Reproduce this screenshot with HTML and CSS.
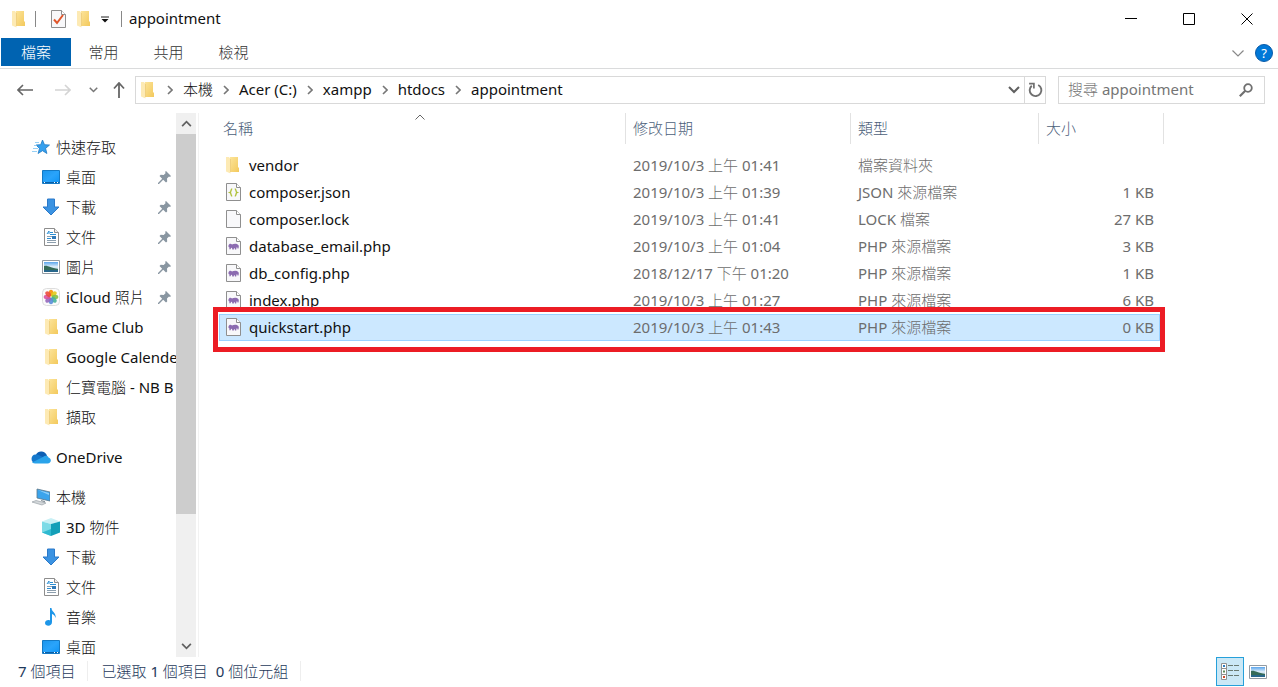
FILE: index.html
```html
<!DOCTYPE html>
<html lang="zh-Hant">
<head>
<meta charset="utf-8">
<title>appointment</title>
<link rel="stylesheet" href="styles.css">
</head>
<body>
<svg class="defs" aria-hidden="true">
  <defs>
    <linearGradient id="g-folder" x1="0" x2="1" y1="0" y2="1"><stop offset="0" stop-color="#fce49a"/><stop offset="1" stop-color="#f3c95c"/></linearGradient>
    <linearGradient id="g-screen" x1="0" x2="1" y1="0" y2="1"><stop offset="0" stop-color="#1b95ec"/><stop offset=".5" stop-color="#2aa4fb"/><stop offset="1" stop-color="#0c93f5"/></linearGradient>
    <linearGradient id="g-photo" x1="0" x2="0" y1="0" y2="1"><stop offset="0" stop-color="#5aa5ec"/><stop offset=".5" stop-color="#e4f1fa"/><stop offset="1" stop-color="#4b86a8"/></linearGradient>
    <symbol id="folder" viewBox="0 0 13 18"><path d="M4 1h8v10l1 1v4H4z" fill="url(#g-folder)"/><path d="M0 1h3l1.500 2v14.500L0 15.500z" fill="#fdeab4"/><path d="M4.500 3v13" stroke="#f0d080"/></symbol>
    <symbol id="desktop" viewBox="0 0 18 14"><path d="M.5.5h17v13H.5z" fill="url(#g-screen)" stroke="#1479c4"/><path d="M1 12.500h16" stroke="#0b5fa5"/><path d="M2 12.500h1M12 12.500h1M15 12.500h1" stroke="#fff"/></symbol>
    <symbol id="download" viewBox="0 0 18 18"><path d="M5.500 1h7v8H17l-8 8L1 9h4.500z" fill="#3b93e2" stroke="#2b79c9"/></symbol>
    <symbol id="document" viewBox="0 0 15 18"><path d="M.5.5h10l4 4v13H.5z" fill="#fff" stroke="#8d8d8d"/><path d="M10.500.5v4h4" fill="#eee" stroke="#8d8d8d"/><path d="M3 8.500h5M3 12.500h9M3 14.500h9" stroke="#8d9fae"/><path d="m3 6 2-3v3M6 4.500h3M6 6.500h6M3 10.500h4" fill="none" stroke="#2b8fd4"/><path d="M8 8h4v3H8z" fill="#2f79b8"/></symbol>
    <symbol id="picture" viewBox="0 0 18 14"><path d="M.5.5h17v13H.5z" fill="#fff" stroke="#929ba3"/><path d="M2 2h14v10H2z" fill="url(#g-photo)"/><path d="M2 6c4-1 6 2 14 3v1H2z" fill="#356b58"/><path d="M2 10h14v2H2z" fill="#28678b"/></symbol>
    <symbol id="pin" viewBox="0 0 13 13"><path d="m8 0 5 5-1 1-1-.5-2 2 .2 3L8 11.500 5.200 8.800 1 13H0v-1l4.200-4.200L1.500 5 2.700 3.800l3 .2 2-2L7 1z" fill="#8996a1"/></symbol>
    <symbol id="chevron" viewBox="0 0 6 10"><path d="m1 1 4 4-4 4" fill="none" stroke="#777" stroke-width="1.600"/></symbol>
    <symbol id="down" viewBox="0 0 12 8"><path d="m1 1 5 5 5-5" fill="none" stroke="currentColor" stroke-width="2"/></symbol>
    <symbol id="page" viewBox="0 0 15 18"><path d="M.5.5h10l4 4v13H.5z" fill="#f8f8fa" stroke="#8f8f8f"/><path d="M10.500.5v4h4" fill="#fff" stroke="#8f8f8f"/></symbol>
    <symbol id="php" viewBox="0 0 15 18"><use href="#page"/><path d="M2.500 8.500C3 6.500 5 6.500 6 7.500c2-1 5-1 6.300.5.900 1 .4 2 .2 3.500h-1l-.3-1.200-.7.200-.3 2H9l-.5-1.500H8l-.2 1.500H6.300L6 10.700l-1 .2-.4 1.300H3.300l.2-1.700c-1-.3-1.200-1-1-2z" fill="#8b6bb0"/></symbol>
    <symbol id="json" viewBox="0 0 15 18"><use href="#page"/><path d="M6.200 6C4.500 6 5.500 9 4 9.500c1.500.5.5 3.500 2.200 3.500M8.800 6c1.700 0 .7 3 2.200 3.500-1.500.5-.5 3.500-2.200 3.500" fill="none" stroke="#b0c13c" stroke-width="1.400"/></symbol>
  </defs>
</svg>

<header class="titlebar">
  <svg class="i-folder"><use href="#folder"/></svg>
  <span class="rule"></span>
  <button class="plain" aria-label="內容"><svg class="i-page" viewBox="0 0 15 18"><use href="#page"/><path d="m3 9.500 3 3.500 6-8" fill="none" stroke="#e0562b" stroke-width="2"/></svg></button>
  <button class="plain" aria-label="新增資料夾"><svg class="i-folder"><use href="#folder"/></svg></button>
  <button class="plain" aria-label="自訂"><svg class="i-custom" viewBox="0 0 8 7"><path d="M0 1h8" stroke="#222"/><path d="M.5 3h7L4 6.500z" fill="#111"/></svg></button>
  <span class="rule"></span>
  <h1 class="title">appointment</h1>
  <div class="window-buttons">
    <button class="plain" aria-label="最小化"><svg viewBox="0 0 12 12"><path d="M0 5.500h12" stroke="#000"/></svg></button>
    <button class="plain" aria-label="最大化"><svg viewBox="0 0 12 12"><path d="M.5.5h11v11H.5z" fill="none" stroke="#000"/></svg></button>
    <button class="plain" aria-label="關閉"><svg viewBox="0 0 12 12"><path d="m.5.5 11 11M11.500.5l-11 11" stroke="#000"/></svg></button>
  </div>
</header>

<div class="ribbon">
  <button class="tab tab-file">檔案</button>
  <button class="tab">常用</button>
  <button class="tab">共用</button>
  <button class="tab">檢視</button>
  <div class="ribbon-end">
    <button class="plain" aria-label="展開功能區"><svg class="i-expand" viewBox="0 0 12 7"><path d="m.5.5 5.500 5.500L11.500.5" fill="none" stroke="#888" stroke-width="1.200"/></svg></button>
    <button class="help" aria-label="說明">?</button>
  </div>
</div>

<div class="address-row">
  <div class="nav-buttons">
    <button class="plain b-back" aria-label="上一頁"><svg class="i-arrow" viewBox="0 0 16 12"><path d="M16 6H1M6 1 1 6l5 5" fill="none" stroke="#666" stroke-width="1.600"/></svg></button>
    <button class="plain b-forward" aria-label="下一頁"><svg class="i-arrow" viewBox="0 0 16 12"><path d="M0 6h15M10 1l5 5-5 5" fill="none" stroke="#d4d4d4" stroke-width="1.600"/></svg></button>
    <button class="plain b-recent" aria-label="最近的位置"><svg class="i-recent"><use href="#down"/></svg></button>
    <button class="plain b-up" aria-label="上移"><svg class="i-up" viewBox="0 0 12 16"><path d="M6 16V1M1 6.500 6 1l5 5.500" fill="none" stroke="#666" stroke-width="1.800"/></svg></button>
  </div>
  <div class="address">
    <nav class="crumbs" aria-label="路徑">
      <svg class="i-folder"><use href="#folder"/></svg>
      <svg class="i-chev"><use href="#chevron"/></svg><a href="#">本機</a>
      <svg class="i-chev"><use href="#chevron"/></svg><a href="#">Acer (C:)</a>
      <svg class="i-chev"><use href="#chevron"/></svg><a href="#">xampp</a>
      <svg class="i-chev"><use href="#chevron"/></svg><a href="#">htdocs</a>
      <svg class="i-chev"><use href="#chevron"/></svg><a href="#">appointment</a>
    </nav>
    <button class="plain b-history" aria-label="之前的位置"><svg class="i-down"><use href="#down"/></svg></button>
    <button class="plain b-refresh" aria-label="重新整理"><svg class="i-refresh" viewBox="0 0 14 15"><path d="M9.500 2.800A5.500 5.500 0 1 1 3.500 3.500" fill="none" stroke="#707070" stroke-width="1.800"/><path d="M1 1.500h4.500V6" fill="none" stroke="#707070" stroke-width="1.600"/></svg></button>
  </div>
  <label class="search">
    <input type="search" placeholder="搜尋 appointment" aria-label="搜尋 appointment">
    <svg class="i-search" viewBox="0 0 14 14"><circle cx="9" cy="5" r="3.800" fill="none" stroke="#707070" stroke-width="1.800"/><path d="M6.300 7.700.8 13.200" stroke="#707070" stroke-width="2.200"/></svg>
  </label>
</div>

<div class="main">
  <aside class="sidebar">
    <nav class="tree" aria-label="導覽窗格">
      <ul>
        <li><a class="root" href="#"><svg class="i-18" viewBox="0 0 18 18"><path d="m10.500 2 2 4.700 5 .3-3.900 3.400 1.300 5.100-4.400-2.800-4.400 2.800 1.400-5.100L4 7l4.700-.3z" fill="#35a0ee" stroke="#1f78c2" stroke-width=".8"/><path d="M3 4.500h4M2 7.500h3M1 10.500h5M0 13.500h5" stroke="#7cc4f2" stroke-width=".8"/></svg><span>快速存取</span></a></li>
        <li><a href="#"><svg class="i-wide"><use href="#desktop"/></svg><span>桌面</span><svg class="i-pin"><use href="#pin"/></svg></a></li>
        <li><a href="#"><svg class="i-18"><use href="#download"/></svg><span>下載</span><svg class="i-pin"><use href="#pin"/></svg></a></li>
        <li><a href="#"><svg class="i-doc"><use href="#document"/></svg><span>文件</span><svg class="i-pin"><use href="#pin"/></svg></a></li>
        <li><a href="#"><svg class="i-wide"><use href="#picture"/></svg><span>圖片</span><svg class="i-pin"><use href="#pin"/></svg></a></li>
        <li><a href="#"><svg class="i-18" viewBox="0 0 18 18"><rect x=".5" y=".5" width="17" height="17" rx="4" fill="#fbfbfb" stroke="#ddd"/><g transform="translate(9 9)"><ellipse cy="-4" rx="2.200" ry="3.300" fill="#f79a1e"/><ellipse cy="-4" rx="2.200" ry="3.300" fill="#e3c91c" fill-opacity=".9" transform="rotate(45)"/><ellipse cy="-4" rx="2.200" ry="3.300" fill="#84bf45" fill-opacity=".9" transform="rotate(90)"/><ellipse cy="-4" rx="2.200" ry="3.300" fill="#46b39a" fill-opacity=".9" transform="rotate(135)"/><ellipse cy="-4" rx="2.200" ry="3.300" fill="#5a8ed8" fill-opacity=".9" transform="rotate(180)"/><ellipse cy="-4" rx="2.200" ry="3.300" fill="#9467bd" fill-opacity=".9" transform="rotate(225)"/><ellipse cy="-4" rx="2.200" ry="3.300" fill="#d9529b" fill-opacity=".9" transform="rotate(270)"/><ellipse cy="-4" rx="2.200" ry="3.300" fill="#ec4b3c" fill-opacity=".9" transform="rotate(315)"/></g></svg><span>iCloud 照片</span><svg class="i-pin"><use href="#pin"/></svg></a></li>
        <li><a href="#"><svg class="i-folder"><use href="#folder"/></svg><span>Game Club</span></a></li>
        <li><a href="#"><svg class="i-folder"><use href="#folder"/></svg><span>Google Calende</span></a></li>
        <li><a href="#"><svg class="i-folder"><use href="#folder"/></svg><span>仁寶電腦 - NB B</span></a></li>
        <li><a href="#"><svg class="i-folder"><use href="#folder"/></svg><span>擷取</span></a></li>
      </ul>
      <ul>
        <li><a class="root" href="#"><svg class="i-cloud" viewBox="0 0 20 13"><path d="M5 4a6 6 0 0 1 11 1.500L9 9z" fill="#0d5fb4"/><path d="M4.500 4C7 3.500 9 5 13 7l-9 5.500A4.300 4.300 0 0 1 4.500 4z" fill="#1478cc"/><path d="M12 6.500c2-2 5-1.500 5.500.5 3.500 1 3 6-1 6H4c-1.500 0-3-1-3-1z" fill="#2aa3ea"/></svg><span>OneDrive</span></a></li>
      </ul>
      <ul>
        <li><a class="root" href="#"><svg class="i-18" viewBox="0 0 18 18"><path d="m5 1 13 3v9L5 10z" fill="#3ba4ec" stroke="#5d7688" stroke-width=".8"/><path d="m6 2 11 3v2z" fill="#8fd0fa"/><path d="m0 14 4-1.500L14 15l-4 2z" fill="#d4d8db" stroke="#9ba2a7" stroke-width=".7"/><path d="m9 12 4 1v1.500L9 13z" fill="#8a949b"/></svg><span>本機</span></a></li>
        <li><a href="#"><svg class="i-18" viewBox="0 0 18 18"><path d="M0 3.500 9 0l9 3.500L9 6z" fill="#c9f0f5"/><path d="m0 3.500 9 2.500v12l-9-3.500z" fill="#7ddbe7"/><path d="m9 6 9-2.500v11L9 18z" fill="#139fb8"/><path d="M0 14.500 9 11v7z" fill="#2fb9d0"/></svg><span>3D 物件</span></a></li>
        <li><a href="#"><svg class="i-18"><use href="#download"/></svg><span>下載</span></a></li>
        <li><a href="#"><svg class="i-doc"><use href="#document"/></svg><span>文件</span></a></li>
        <li><a href="#"><svg class="i-18" viewBox="0 0 18 18"><path d="M8 0h1.500c0 4 5 4.500 4 10-.5-2.500-2-3.500-3.500-4v8c0 5-7 4.500-7 1 0-2.500 3-3.500 5-2.500z" fill="#1d96e8"/></svg><span>音樂</span></a></li>
        <li><a href="#"><svg class="i-wide"><use href="#desktop"/></svg><span>桌面</span></a></li>
      </ul>
    </nav>
    <div class="scrollbar" aria-hidden="true">
      <div class="scroll-arrow"><svg class="i-down flip"><use href="#down"/></svg></div>
      <div class="scroll-thumb"></div>
      <div class="scroll-rest"></div>
      <div class="scroll-arrow"><svg class="i-down"><use href="#down"/></svg></div>
    </div>
  </aside>

  <main class="files">
    <table>
      <colgroup><col class="c-name"><col class="c-date"><col class="c-type"><col class="c-size"><col class="c-end"></colgroup>
      <thead>
        <tr>
          <th class="sorted">名稱<svg class="i-sort" viewBox="0 0 10 6"><path d="m.5 5.500 4.500-4.500 4.500 4.500" fill="none" stroke="#666"/></svg></th>
          <th>修改日期</th><th>類型</th><th class="h-size">大小</th><th class="h-end"></th>
        </tr>
      </thead>
      <tbody>
        <tr><td class="name"><div class="file"><svg class="i-folder"><use href="#folder"/></svg>vendor</div></td><td>2019/10/3 上午 01:41</td><td>檔案資料夾</td><td></td><td></td></tr>
        <tr><td class="name"><div class="file"><svg class="i-page"><use href="#json"/></svg>composer.json</div></td><td>2019/10/3 上午 01:39</td><td>JSON 來源檔案</td><td class="size">1 KB</td><td></td></tr>
        <tr><td class="name"><div class="file"><svg class="i-page"><use href="#page"/></svg>composer.lock</div></td><td>2019/10/3 上午 01:41</td><td>LOCK 檔案</td><td class="size">27 KB</td><td></td></tr>
        <tr><td class="name"><div class="file"><svg class="i-page"><use href="#php"/></svg>database_email.php</div></td><td>2019/10/3 上午 01:04</td><td>PHP 來源檔案</td><td class="size">3 KB</td><td></td></tr>
        <tr><td class="name"><div class="file"><svg class="i-page"><use href="#php"/></svg>db_config.php</div></td><td>2018/12/17 下午 01:20</td><td>PHP 來源檔案</td><td class="size">1 KB</td><td></td></tr>
        <tr><td class="name"><div class="file"><svg class="i-page"><use href="#php"/></svg>index.php</div></td><td>2019/10/3 上午 01:27</td><td>PHP 來源檔案</td><td class="size">6 KB</td><td></td></tr>
        <tr class="selected"><td class="name"><div class="file"><svg class="i-page"><use href="#php"/></svg>quickstart.php</div></td><td>2019/10/3 上午 01:43</td><td>PHP 來源檔案</td><td class="size">0 KB</td><td><span class="marker"></span></td></tr>
      </tbody>
    </table>
  </main>
</div>

<footer class="status">
  <span class="status-item">7 個項目</span>
  <span class="status-item">已選取 1 個項目&nbsp; 0 個位元組</span>
  <div class="views">
    <button class="view view-on" aria-label="詳細資料"><svg class="i-details" viewBox="0 0 18 17"><path d="M.5.5h5v16h-5zM.5 5.500h5M.5 11.500h5" fill="#fff" stroke="#909090"/><path d="M2 3h2" stroke="#2b7cc0" stroke-width="2"/><path d="M2 8.500h2" stroke="#5d8a5a" stroke-width="2"/><path d="M2 14h2" stroke="#d04a2b" stroke-width="2"/><path d="M7 2.500h5m1 0h5M7 7.500h5m1 0h5M7 12.500h5m1 0h5" stroke="#6a7a72"/></svg></button>
    <button class="view" aria-label="大圖示"><svg class="i-wide"><use href="#picture"/></svg></button>
  </div>
</footer>
</body>
</html>
```

FILE: styles.css
```css
* {
  box-sizing: border-box;
}

body {
  margin: 0;
  height: 100vh;
  display: flex;
  flex-direction: column;
  overflow: hidden;
  background: #fff;
  color: #111;
  font: 15px/20px "Noto Sans", "Noto Sans CJK TC Light", "Noto Sans CJK TC DemiLight", "Noto Sans CJK TC", sans-serif;
}

svg {
  display: block;
  flex: none;
}

button,
input {
  font: inherit;
  color: inherit;
}

a {
  color: inherit;
  text-decoration: none;
}

ul {
  list-style: none;
  margin: 0;
  padding: 0;
}

.defs {
  position: absolute;
  width: 0;
  height: 0;
}

.plain {
  display: flex;
  align-items: center;
  justify-content: center;
  padding: 0;
  border: 0;
  background: none;
}

.i-folder { width: 13px; height: 18px; }
.i-page, .i-doc { width: 15px; height: 18px; }
.i-18 { width: 18px; height: 18px; }
.i-wide { width: 18px; height: 14px; }
.i-cloud { width: 20px; height: 14px; }
.i-pin { width: 13px; height: 13px; }
.i-custom { width: 8px; height: 7px; }
.i-expand { width: 12px; height: 7px; }
.i-arrow { width: 16px; height: 12px; }
.i-recent { width: 9px; height: 6px; color: #777; }
.i-up { width: 12px; height: 16px; }
.i-chev { width: 6px; height: 10px; }
.i-down { width: 12px; height: 8px; color: #606060; }
.i-refresh { width: 15px; height: 16px; }
.i-search { width: 14px; height: 14px; }
.i-details { width: 18px; height: 17px; }

/* Title bar */
.titlebar {
  display: flex;
  align-items: center;
  height: 38px;
  padding-left: 12px;
}

.titlebar .rule {
  width: 1px;
  height: 16px;
  margin: 0 15px 0 10px;
  background: #888;
}

.titlebar .plain + .plain {
  margin-left: 11px;
}

.titlebar .plain + .rule {
  margin: 0 7px 0 12px;
}

.title {
  margin: 0;
  padding-bottom: 2px;
  font-size: 15px;
  font-weight: 400;
}

.window-buttons {
  display: flex;
  margin-left: auto;
  padding-right: 2px;
}

.window-buttons .plain,
.titlebar .window-buttons .plain + .plain {
  width: 58px;
  height: 38px;
  margin: 0;
}

.window-buttons svg {
  width: 12px;
  height: 12px;
}

/* Ribbon */
.ribbon {
  display: flex;
  height: 31px;
  padding: 0 5px 0 1px;
  border-bottom: 1px solid #dadbdc;
}

.tab {
  width: 65px;
  height: 28px;
  padding: 0;
  border: 0;
  background: none;
  color: #333;
}

.tab-file {
  width: 70px;
  background: #0063b1;
  color: #fff;
}

.ribbon-end {
  display: flex;
  align-items: center;
  gap: 11px;
  margin-left: auto;
}

.help {
  width: 18px;
  height: 18px;
  padding: 0;
  border: 1px solid #0a5ba8;
  border-radius: 50%;
  background: #0078d7;
  color: #fff;
  font-size: 13px;
  line-height: 16px;
}

/* Address row */
.address-row {
  display: flex;
  align-items: center;
  height: 42px;
  padding-right: 13px;
}

.nav-buttons {
  display: flex;
  align-items: center;
  width: 135px;
  padding-left: 17px;
}

.b-back { margin-right: 22px; }
.b-forward { margin-right: 18px; }
.b-recent { margin-right: 15px; }

.address {
  flex: 1;
  display: flex;
  height: 28px;
  border: 1px solid #d9d9d9;
}

.crumbs {
  flex: 1;
  display: flex;
  align-items: center;
  padding-left: 5px;
}

.crumbs a {
  padding-bottom: 2px;
}

.crumbs .i-chev {
  margin: 0 10px;
}

.crumbs .i-folder + .i-chev {
  margin-left: 13px;
}

.b-history {
  width: 20px;
}

.b-refresh {
  width: 21px;
  border-left: 1px solid #d9d9d9;
}

.search {
  display: flex;
  align-items: center;
  width: 207px;
  height: 28px;
  margin-left: 12px;
  padding: 0 11px 0 9px;
  border: 1px solid #d9d9d9;
}

.search input {
  flex: 1;
  min-width: 0;
  padding: 0 0 2px;
  border: 0;
  outline: 0;
  background: none;
}

.search input::placeholder {
  color: #757575;
}

/* Main area */
.main {
  flex: 1;
  display: flex;
  min-height: 0;
  padding-top: 2px;
}

.sidebar {
  display: flex;
  width: 199px;
  padding-right: 2px;
  border-right: 1px solid #f2f2f2;
}

.tree {
  flex: 1;
  min-width: 0;
  padding-top: 19px;
  overflow: hidden;
}

.tree ul + ul {
  margin-top: 10px;
}

.tree a {
  display: grid;
  grid-template-columns: 18px 1fr auto;
  align-items: center;
  column-gap: 6px;
  height: 30px;
  padding: 0 5px 0 42px;
  white-space: nowrap;
}

.tree a > svg:first-child {
  justify-self: center;
}

.tree a span {
  min-width: 0;
}

.tree .root {
  padding-left: 32px;
}

.scrollbar {
  display: flex;
  flex-direction: column;
  width: 20px;
  background: #f0f0f0;
}

.scroll-arrow {
  display: flex;
  align-items: center;
  justify-content: center;
  height: 21px;
}

.scroll-arrow svg {
  width: 11px;
  height: 7px;
}

.flip {
  transform: rotate(180deg);
}

.scroll-thumb {
  flex: 380;
  background: #cdcdcd;
}

.scroll-rest {
  flex: 122;
}

/* File list */
.files {
  flex: 1;
  min-width: 0;
  padding-left: 20px;
}

table {
  width: 945px;
  table-layout: fixed;
  border-collapse: separate;
  border-spacing: 0;
}

.c-name { width: 407px; }
.c-date { width: 225px; }
.c-type { width: 188px; }
.c-size { width: 121px; }
.c-end { width: 4px; }

th {
  position: relative;
  height: 31px;
  padding: 0 7px 2px;
  border-right: 1px solid #e2e2e2;
  color: #4c607a;
  font-weight: 400;
  text-align: left;
}

th.sorted {
  padding-left: 4px;
}

th.h-size {
  border-right: 0;
}

th.h-end {
  padding: 0;
}

.i-sort {
  position: absolute;
  top: 1px;
  left: 50%;
  width: 10px;
  height: 6px;
  margin-left: -7px;
}

thead::after {
  content: "";
  display: block;
  height: 8px;
}

td {
  height: 27px;
  padding: 0 7px 2px;
  color: #6d6d6d;
  white-space: nowrap;
}

td:last-child {
  padding: 0;
}

td.name {
  color: #111;
}

.file {
  display: flex;
  align-items: center;
  gap: 8px;
}

.file .i-folder {
  margin-right: 2px;
}

td.size {
  padding-right: 6px;
  text-align: right;
}

.selected {
  position: relative;
}

.selected td:not(:last-child) {
  background: #cce8ff;
  border: solid #99d1ff;
  border-width: 1px 0;
}

.selected td.name {
  padding-left: 6px;
  border-left-width: 1px;
}

.selected td.size {
  padding-right: 5px;
  border-right-width: 1px;
}

.marker {
  position: absolute;
  inset: -7px -1px -11px -6px;
  border: 5px solid #ec1c24;
}

/* Status bar */
.status {
  display: flex;
  align-items: flex-start;
  height: 30px;
  padding: 0 6px 0 18px;
  color: #1e395b;
}

.status-item {
  margin: 4px 13px 0 0;
  padding-right: 12px;
  border-right: 1px solid #eee;
}

.views {
  display: flex;
  margin-left: auto;
}

.view {
  display: flex;
  align-items: center;
  justify-content: center;
  width: 28px;
  height: 29px;
  padding: 0;
  border: 1px solid transparent;
  background: none;
}

.view-on {
  border-color: #26a0da;
  background: #cbe8f6;
}
```
